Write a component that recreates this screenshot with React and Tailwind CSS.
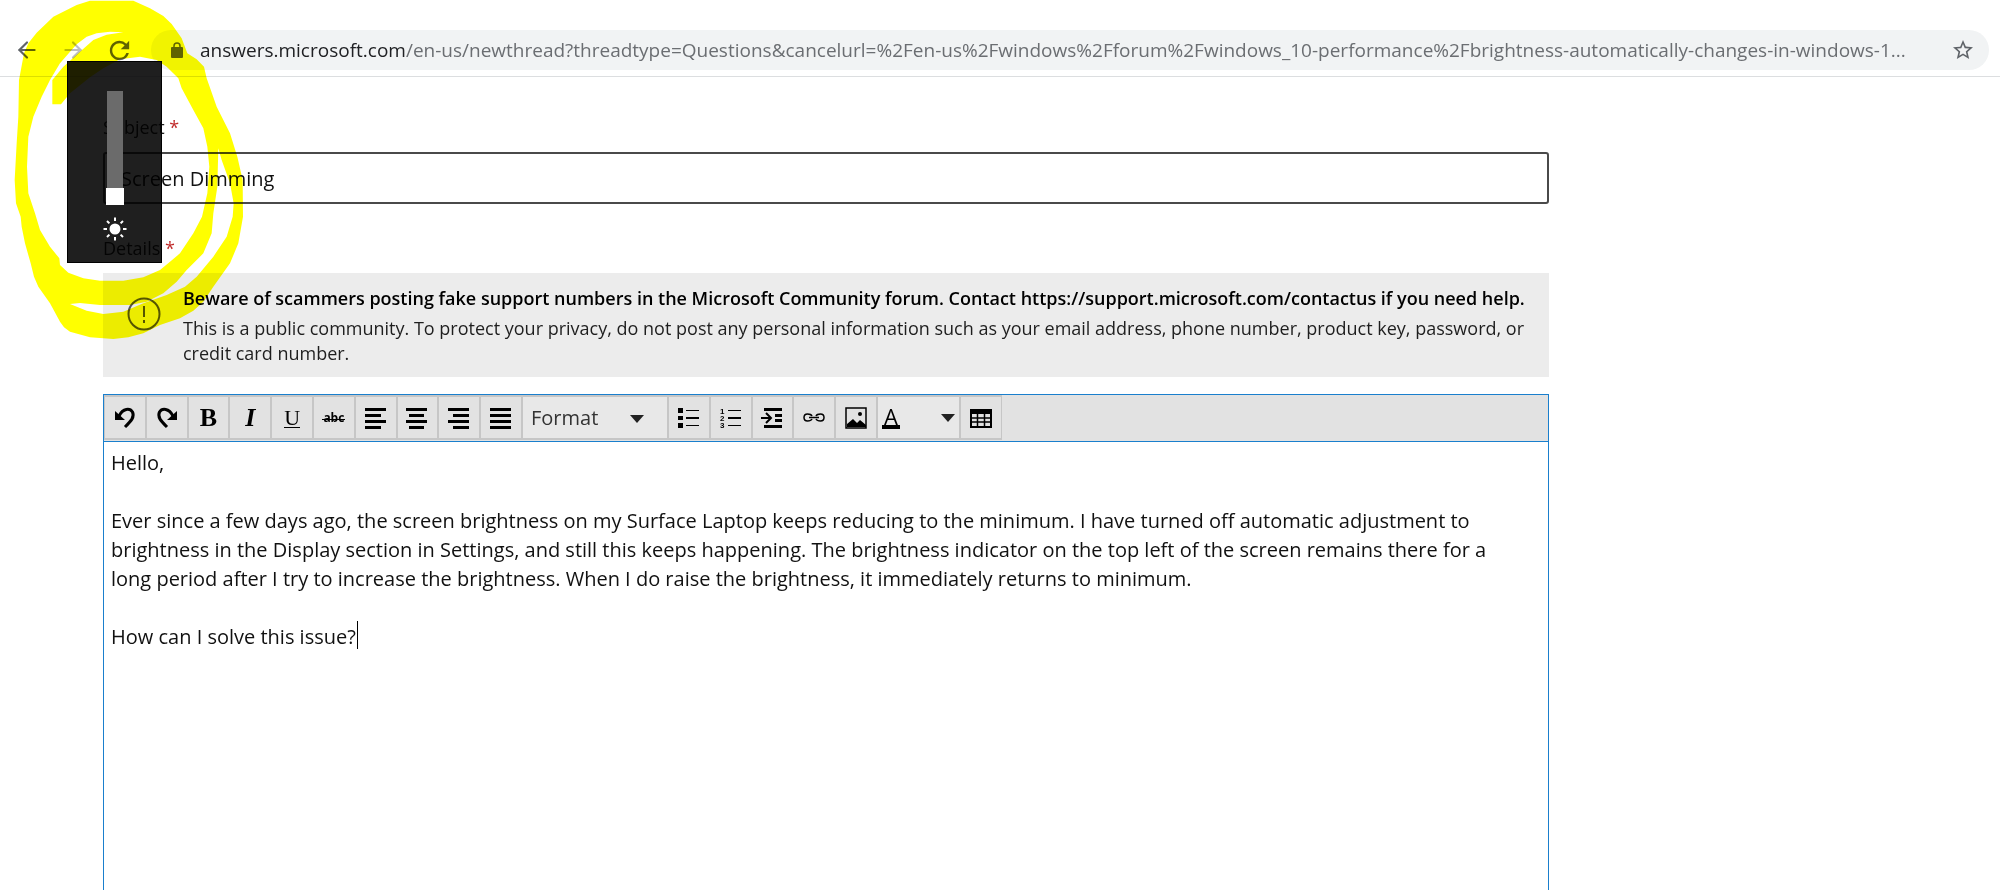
import { ArrowLeft, ArrowRight } from "lucide-react";
import { MdRefresh, MdStarBorder } from "react-icons/md";

const message = `Hello,

Ever since a few days ago, the screen brightness on my Surface Laptop keeps reducing to the minimum. I have turned off automatic adjustment to brightness in the Display section in Settings, and still this keeps happening. The brightness indicator on the top left of the screen remains there for a long period after I try to increase the brightness. When I do raise the brightness, it immediately returns to minimum.

How can I solve this issue?`;

function Glyph({ children }) {
  return (
    <svg viewBox="0 0 22 22" className="w-[22px] h-[22px] overflow-visible" fill="currentColor" aria-hidden="true">
      {children}
    </svg>
  );
}

function Bars({ rows }) {
  return (
    <Glyph>
      {rows.map(([x, w], idx) => (
        <rect key={idx} x={x} y={1 + idx * 6} width={w} height="3" />
      ))}
    </Glyph>
  );
}

const textTools = [
  {
    label: "Undo",
    icon: (
      <Glyph>
        <path d="M1 4v9h10z" />
        <path d="M5 9C9 1 16 1 18.500 5C21 10 17 14 11 20" fill="none" stroke="currentColor" strokeWidth="3" />
      </Glyph>
    ),
  },
  {
    label: "Redo",
    icon: (
      <Glyph>
        <path d="M21 4v9h-10z" />
        <path d="M17 9C13 1 6 1 3.500 5C1 10 5 14 11 20" fill="none" stroke="currentColor" strokeWidth="3" />
      </Glyph>
    ),
  },
  { label: "Bold", icon: <span className="font-['Liberation_Serif'] font-bold text-[26px]">B</span> },
  { label: "Italic", icon: <span className="font-['Liberation_Serif'] font-bold italic text-[26px]">I</span> },
  {
    label: "Underline",
    icon: <span className="font-['Liberation_Serif'] text-[22px] leading-[19px] border-b border-black">U</span>,
  },
  {
    label: "Strikethrough",
    icon: (
      <span className="relative px-[1px] font-bold text-[12px]">
        abc
        <span className="absolute inset-x-0 top-[10px] h-px bg-black" />
      </span>
    ),
  },
  { label: "Align left", icon: <Bars rows={[[0, 21], [0, 16], [0, 21], [0, 16]]} /> },
  { label: "Align center", icon: <Bars rows={[[0, 21], [3, 15], [0, 21], [3, 15]]} /> },
  { label: "Align right", icon: <Bars rows={[[0, 21], [5, 16], [0, 21], [5, 16]]} /> },
  { label: "Justify", icon: <Bars rows={[[0, 21], [0, 21], [0, 21], [0, 21]]} /> },
];

const insertTools = [
  {
    label: "Bulleted list",
    icon: (
      <Glyph>
        <path d="M0 1h5v5H0zM0 9h5v4H0zM0 16h5v5H0zM8 3h13v1H8zM8 10h13v2H8zM8 18h13v1H8z" />
      </Glyph>
    ),
  },
  {
    label: "Numbered list",
    icon: (
      <Glyph>
        <g className="font-['Liberation_Sans'] font-bold" fontSize="8">
          <text x="0" y="7">1</text>
          <text x="0" y="14">2</text>
          <text x="0" y="21">3</text>
        </g>
        <path d="M8 3h13v1H8zM8 10h13v2H8zM8 18h13v1H8z" />
      </Glyph>
    ),
  },
  {
    label: "Indent",
    icon: (
      <Glyph>
        <path d="M3 1h18v3H3zM14 7h7v3h-7zM14 12h7v3h-7zM3 18h18v3H3z" />
        <path d="M0 11h9M5 6l5 5l-5 5" fill="none" stroke="currentColor" strokeWidth="2" />
      </Glyph>
    ),
  },
  {
    label: "Link",
    icon: (
      <Glyph>
        <path
          d="M9 9C8 7 6 7 4.500 7C2 7 1 9 1 10.500C1 12 2 14 4.500 14C6 14 8 14 9 12M13 9C14 7 16 7 17.500 7C20 7 21 9 21 10.500C21 12 20 14 17.500 14C16 14 14 14 13 12M6 10.500h10"
          fill="none"
          stroke="currentColor"
          strokeWidth="1.500"
        />
      </Glyph>
    ),
  },
  {
    label: "Image",
    icon: (
      <Glyph>
        <path d="M1 1h20v20H1z" fill="none" stroke="currentColor" strokeWidth="1.500" />
        <path d="M2 20v-3l6-5l4 4l3-3l6 5v2z" />
        <circle cx="15" cy="7" r="2" />
      </Glyph>
    ),
  },
];

function ToolButton({ label, children }) {
  return (
    <button
      type="button"
      aria-label={label}
      className="flex-1 h-[45px] flex items-center justify-center bg-[#e2e2e2] border-x border-y-2 border-[#c6c6c6]"
    >
      {children}
    </button>
  );
}

function Caret() {
  return (
    <svg viewBox="0 0 14 8" className="w-[14px] h-2 pointer-events-none" fill="#222" aria-hidden="true">
      <path d="M0 0h14L7 8z" />
    </svg>
  );
}

function AddressBar() {
  return (
    <header className="h-[77px] pt-[30px] pl-1 pr-[11px] flex items-start border-b border-[#dcdee0]">
      <div className="h-10 w-[147px] flex items-center shrink-0">
        <button type="button" aria-label="Back" className="w-[46px] flex justify-center text-[#5f6368]">
          <ArrowLeft size={26} strokeWidth={2} />
        </button>
        <button type="button" aria-label="Forward" className="w-[46px] flex justify-center text-[#bbbdc0]">
          <ArrowRight size={26} strokeWidth={2} />
        </button>
        <button type="button" aria-label="Reload" className="w-[46px] flex justify-center text-[#5f6368]">
          <MdRefresh size={29} />
        </button>
      </div>
      <div className="flex-1 min-w-0 h-10 rounded-full bg-[#f1f3f4] flex items-center pl-5 pr-[14px]">
        <svg viewBox="0 0 12 16" className="w-3 h-4 shrink-0" fill="#5f6368" aria-hidden="true">
          <rect y="5" width="12" height="11" rx="1" />
          <path d="M3 6V4a3 3 0 0 1 6 0v2" fill="none" stroke="#5f6368" strokeWidth="1.500" />
        </svg>
        <p className="ml-[17px] flex-1 min-w-0 truncate text-[19px] leading-7 text-[#6b6e72]">
          <span className="text-[#202124]">answers.microsoft.com</span>
          /en-us/newthread?threadtype=Questions&amp;cancelurl=%2Fen-us%2Fwindows%2Fforum%2Fwindows_10-performance%2Fbrightness-automatically-changes-in-windows-1...
        </p>
        <button type="button" aria-label="Bookmark" className="text-[#5f6368] shrink-0">
          <MdStarBorder size={24} />
        </button>
      </div>
    </header>
  );
}

function Notice() {
  return (
    <section className="mt-[13px] min-h-[104px] bg-[#ececec] flex">
      <div className="w-20 shrink-0 pt-6 pl-6">
        <svg viewBox="0 0 34 34" className="w-[34px] h-[34px]" fill="none" stroke="#555" strokeWidth="2" aria-hidden="true">
          <circle cx="17" cy="17" r="15.500" />
          <path d="M17 9v11M17 23v3" />
        </svg>
      </div>
      <div className="pt-[11px] pr-3 text-[18px] leading-[25px] text-[#1e1e1e]">
        <p className="font-semibold text-black leading-[28px] mb-1">
          Beware of scammers posting fake support numbers in the Microsoft Community forum. Contact
          https://support.microsoft.com/contactus if you need help.
        </p>
        <p>
          This is a public community. To protect your privacy, do not post any personal information such as your
          email address, phone number, product key, password, or credit card number.
        </p>
      </div>
    </section>
  );
}

function Editor() {
  return (
    <section className="mt-[17px] border border-b-0 border-[#1a7fcd]">
      <div className="h-[47px] flex bg-[#e2e2e2] border-b border-[#1a7fcd]">
        <div className="flex w-[418px]">
          {textTools.map((tool) => (
            <ToolButton key={tool.label} label={tool.label}>
              {tool.icon}
            </ToolButton>
          ))}
        </div>
        <div className="relative w-[146px] h-[45px]">
          <select
            aria-label="Format"
            className="appearance-none w-full h-full pl-2 bg-[#e8e8e8] border-x border-y-2 border-[#c6c6c6] text-[20px] text-[#333]"
          >
            <option>Format</option>
          </select>
          <div className="absolute right-6 top-[20px] pointer-events-none">
            <Caret />
          </div>
        </div>
        <div className="flex w-[209px]">
          {insertTools.map((tool) => (
            <ToolButton key={tool.label} label={tool.label}>
              {tool.icon}
            </ToolButton>
          ))}
        </div>
        <button
          type="button"
          aria-label="Text color"
          className="w-[83px] h-[45px] flex items-center justify-between px-1 bg-[#e8e8e8] border-x border-y-2 border-[#c6c6c6]"
        >
          <span className="text-[22px] leading-[18px] px-[2px] border-b-4 border-black">A</span>
          <Caret />
        </button>
        <div className="flex w-[42px]">
          <ToolButton label="Table">
            <Glyph>
              <path d="M1 3h20v17H1z" fill="none" stroke="currentColor" strokeWidth="2" />
              <path d="M0 2h22v5H0z" />
              <path d="M1 11h20M1 15h20M7.500 7v13M14.500 7v13" stroke="currentColor" strokeWidth="1.500" />
            </Glyph>
          </ToolButton>
        </div>
      </div>
      <div className="relative">
        <textarea
          aria-label="Details"
          spellCheck={false}
          defaultValue={message}
          className="block w-full h-[449px] resize-none outline-none overflow-hidden pl-[7px] pr-6 pt-[6px] text-[20px] leading-[29px] text-[#111]"
        />
        <span className="absolute left-[253px] top-[179px] w-px h-7 bg-black" />
      </div>
    </section>
  );
}

function BrightnessPanel() {
  return (
    <aside className="absolute left-[67px] top-[61px] w-[95px] h-[202px] bg-black/88 border border-black flex flex-col items-center pt-[29px] pl-[1px]">
      <input
        type="range"
        min="0"
        max="100"
        defaultValue="0"
        aria-label="Brightness"
        className="appearance-none w-4 h-[114px] bg-[#6b6b6b] [writing-mode:vertical-lr] [direction:rtl] [&::-webkit-slider-thumb]:appearance-none [&::-webkit-slider-thumb]:w-[18px] [&::-webkit-slider-thumb]:h-[17px] [&::-webkit-slider-thumb]:bg-white"
      />
      <svg viewBox="0 0 24 24" className="w-6 h-6 mt-3" fill="white" stroke="white" strokeWidth="2" aria-hidden="true">
        <circle cx="12" cy="12" r="4.500" />
        <path d="M12 0.500v3.500M12 20v3.500M0.500 12h3.500M20 12h3.500M4 4l2.400 2.400M17.600 17.600l2.400 2.400M4 20l2.400-2.400M17.600 6.400l2.400-2.400" />
      </svg>
    </aside>
  );
}

// Freehand marker ring around the brightness panel
function Highlighter() {
  return (
    <svg
      viewBox="0 0 900 1080"
      className="absolute left-0 top-0 w-[300px] h-[360px] mix-blend-multiply pointer-events-none"
      fill="#ffff00"
      fillRule="evenodd"
      aria-hidden="true"
    >
      <path
        d="M230 15L270 2L400 2L450 25L490 48L515 72L545 115L562 160L590 178L612 200L620 235L650 320L690 400L712 470L728 540L729 650L715 730L690 790L640 860L610 905L580 932L540 955L480 975L430 1000L385 1012L340 1017L270 1012L210 995L192 982L180 965L150 910L115 860L102 830L92 790L75 730L65 680L62 650L48 610L44 540L50 430L55 350L57 240L72 160L85 130L110 98L160 50Z
        M183 313L210 280L270 232L310 205L360 178L420 170L470 180L500 200L535 235L545 265L580 330L610 385L622 440L628 500L622 580L606 650L580 700L540 760L510 785L480 810L430 832L370 842L300 842L250 835L205 818L180 795L178 775L150 740L120 690L105 640L85 580L81 500L85 410L100 350L125 290L150 240L180 190L230 133L260 110L290 100L330 95L370 97L320 104L280 120L240 155L190 200L157 240L157 313Z
        M655 445L665 480L690 550L701 610L698 650L680 710L640 770L590 830L555 860L500 885L430 910L370 935L310 942L260 932L210 912L240 909L300 915L390 915L440 905L490 880L530 845L560 810L610 760L635 700L640 640L652 560Z"
      />
    </svg>
  );
}

function App() {
  return (
    <div className="relative isolate min-h-screen overflow-hidden bg-white font-['Open_Sans',sans-serif]">
      <AddressBar />
      <main className="ml-[103px] max-w-[1446px]">
        <label htmlFor="subject" className="block pt-9 h-[75px] text-[18px] leading-7 text-[#222]">
          Subject <span className="text-[#c02b2b]">*</span>
        </label>
        <input
          id="subject"
          type="text"
          defaultValue="Screen Dimming"
          className="block w-full h-[52px] px-4 border-2 border-[#4a4a4a] rounded-[3px] text-[20px] text-[#111]"
        />
        <p className="pt-[30px] h-[56px] text-[18px] leading-7 text-[#222]">
          Details <span className="text-[#c02b2b]">*</span>
        </p>
        <Notice />
        <Editor />
      </main>
      <Highlighter />
      <BrightnessPanel />
    </div>
  );
}

export default App;
